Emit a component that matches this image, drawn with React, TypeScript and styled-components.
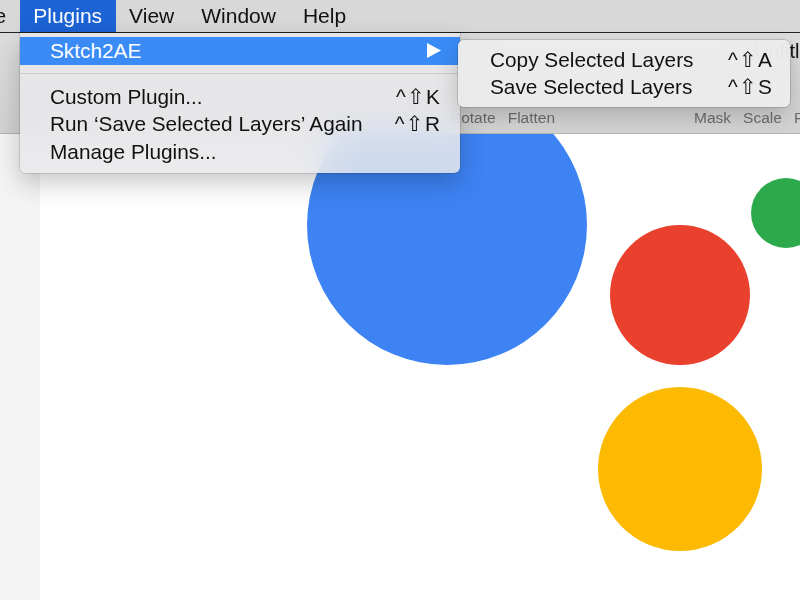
import React from "react";
import styled, { createGlobalStyle } from "styled-components";

const GlobalStyle = createGlobalStyle`
  html, body { margin: 0; padding: 0; overflow: hidden; }
  body { font-family: "Liberation Sans", Arial, "DejaVu Sans", sans-serif; }
`;

const Screen = styled.div`
  position: relative;
  width: 800px;
  height: 600px;
  overflow: hidden;
  display: flex;
  flex-direction: column;
  background: #ffffff;
`;

const MenuBar = styled.div`
  height: 32px;
  flex: 0 0 auto;
  display: flex;
  align-items: stretch;
  background: #d8d8d8;
  border-bottom: 1px solid #222;
  margin-left: -82px;
  font-size: 21px;
  color: #111;
  white-space: nowrap;
`;

const MenuTitle = styled.div<{ $active?: boolean }>`
  display: flex;
  align-items: center;
  padding: 0 13.5px;
  background: ${(p) => (p.$active ? "#1c63d5" : "transparent")};
  color: ${(p) => (p.$active ? "#fff" : "#111")};
`;

const Window = styled.div`
  flex: 1;
  display: flex;
  flex-direction: column;
  min-height: 0;
`;

const Chrome = styled.div`
  height: 100px;
  flex: 0 0 auto;
  display: flex;
  flex-direction: column;
  background: linear-gradient(#dedede, #d2d2d2);
  border-bottom: 1px solid #b4b4b4;
  overflow: hidden;
`;

const TitleRow = styled.div`
  height: 36px;
  display: flex;
  align-items: center;
  padding-left: 754px;
  font-size: 20px;
  color: #111;
  white-space: nowrap;
`;

const IconRow = styled.div`
  flex: 1;
`;

const LabelRow = styled.div`
  height: 22px;
  margin-bottom: 4px;
  display: flex;
  align-items: center;
  padding-left: 450px;
  gap: 12px;
  font-size: 15.5px;
  color: #6c6c6c;
  white-space: nowrap;
`;

const Spacer = styled.div`
  width: 115px;
  flex: 0 0 auto;
`;

const Label = styled.span``;

const Body = styled.div`
  flex: 1;
  display: flex;
  min-height: 0;
`;

const Sidebar = styled.div`
  width: 40px;
  flex: 0 0 auto;
  background: #f4f4f4;
`;

const Canvas = styled.div`
  flex: 1;
  position: relative;
  overflow: hidden;
  background: #fff;
`;

const Circle = styled.div<{ $color: string; $x: number; $y: number; $r: number }>`
  position: absolute;
  left: ${(p) => p.$x - p.$r}px;
  top: ${(p) => p.$y - p.$r}px;
  width: ${(p) => p.$r * 2}px;
  height: ${(p) => p.$r * 2}px;
  border-radius: 50%;
  background: ${(p) => p.$color};
`;

const Dropdown = styled.div`
  position: absolute;
  top: 33px;
  left: 20px;
  width: 440px;
  padding: 4px 0 7px;
  box-sizing: border-box;
  background: rgba(232, 232, 234, 0.86);
  backdrop-filter: blur(18px) saturate(1.3);
  border-radius: 0 0 6px 6px;
  box-shadow: 0 10px 26px rgba(0, 0, 0, 0.22), 0 0 0 1px rgba(0, 0, 0, 0.12);
  font-size: 20.8px;
  color: #111;
`;

const Submenu = styled.div`
  position: absolute;
  top: 40px;
  left: 458px;
  width: 332px;
  padding: 6px 0 6px;
  box-sizing: border-box;
  background: rgba(236, 236, 236, 0.95);
  backdrop-filter: blur(18px);
  border-radius: 6px;
  box-shadow: 0 8px 22px rgba(0, 0, 0, 0.2), 0 0 0 1px rgba(0, 0, 0, 0.14);
  font-size: 20.8px;
  color: #111;
`;

const Item = styled.div<{ $hl?: boolean; $padL: number; $padR: number }>`
  height: 27.5px;
  display: flex;
  align-items: center;
  justify-content: space-between;
  padding: 0 ${(p) => p.$padR}px 0 ${(p) => p.$padL}px;
  background: ${(p) => (p.$hl ? "#3a8bf6" : "transparent")};
  color: ${(p) => (p.$hl ? "#fff" : "#111")};
  white-space: nowrap;
`;

const Shortcut = styled.span`
  font-family: "Liberation Sans", "DejaVu Sans", sans-serif;
  letter-spacing: 1.5px;
  margin-right: -1.5px;
`;

const Separator = styled.div`
  height: 1px;
  margin: 8.5px 0 9px;
  background: #cdcdcd;
`;

const Arrow = () => (
  <svg width="14" height="15" viewBox="0 0 14 15" aria-hidden="true">
    <path d="M0 0 L14 7.5 L0 15 Z" fill="#fff" />
  </svg>
);

export default function App() {
  return (
    <>
      <GlobalStyle />
      <Screen>
        <MenuBar>
          <MenuTitle>Arrange</MenuTitle>
          <MenuTitle $active>Plugins</MenuTitle>
          <MenuTitle>View</MenuTitle>
          <MenuTitle>Window</MenuTitle>
          <MenuTitle>Help</MenuTitle>
        </MenuBar>
        <Window>
          <Chrome>
            <TitleRow>Untitled</TitleRow>
            <IconRow />
            <LabelRow>
              <Label>Rotate</Label>
              <Label>Flatten</Label>
              <Spacer />
              <Label>Mask</Label>
              <Label>Scale</Label>
              <Label>Rulers</Label>
            </LabelRow>
          </Chrome>
          <Body>
            <Sidebar />
            <Canvas>
              <Circle $color="#3d83f4" $x={407} $y={91} $r={140} />
              <Circle $color="#ea412f" $x={640} $y={161} $r={70} />
              <Circle $color="#fcbb02" $x={640} $y={335} $r={82} />
              <Circle $color="#2ba94b" $x={746} $y={79} $r={35} />
            </Canvas>
          </Body>
        </Window>
        <Dropdown>
          <Item $hl $padL={30} $padR={19}>
            <span>Sktch2AE</span>
            <Arrow />
          </Item>
          <Separator />
          <Item $padL={30} $padR={20}>
            <span>Custom Plugin...</span>
            <Shortcut>^⇧K</Shortcut>
          </Item>
          <Item $padL={30} $padR={20}>
            <span>Run ‘Save Selected Layers’ Again</span>
            <Shortcut>^⇧R</Shortcut>
          </Item>
          <Item $padL={30} $padR={20}>
            <span>Manage Plugins...</span>
          </Item>
        </Dropdown>
        <Submenu>
          <Item $padL={32} $padR={18}>
            <span>Copy Selected Layers</span>
            <Shortcut>^⇧A</Shortcut>
          </Item>
          <Item $padL={32} $padR={18}>
            <span>Save Selected Layers</span>
            <Shortcut>^⇧S</Shortcut>
          </Item>
        </Submenu>
      </Screen>
    </>
  );
}
